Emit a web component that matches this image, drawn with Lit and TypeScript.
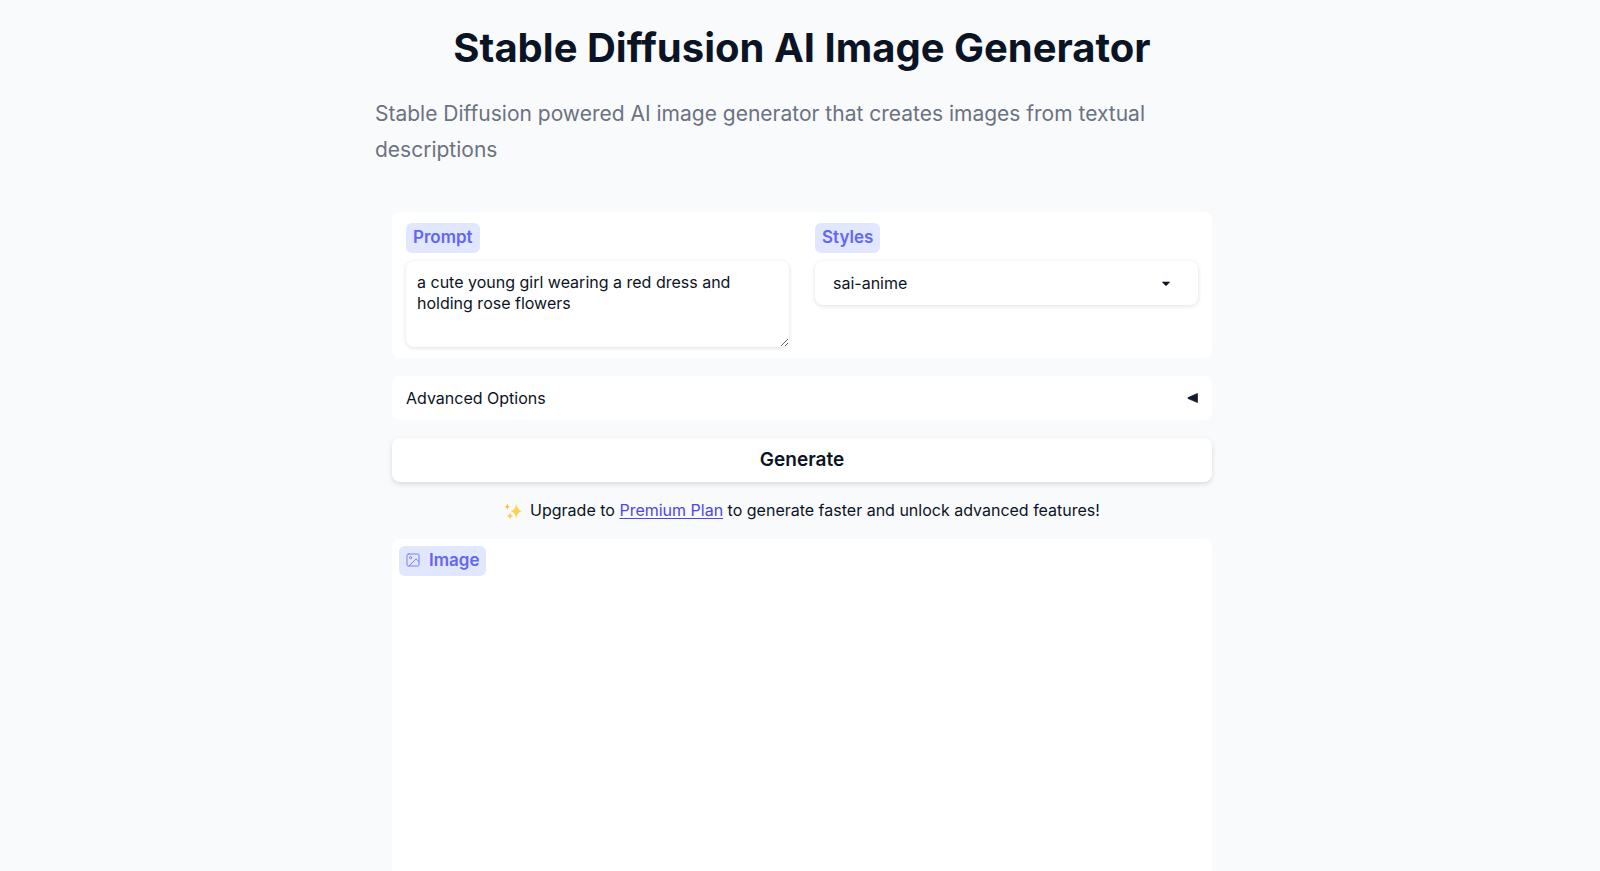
import { LitElement, html, css } from "lit";
import { customElement, state } from "lit/decorators.js";

@customElement("app-root")
export class AppRoot extends LitElement {
  static styles = css`
    :host {
      display: block;
      color: #0b1424;
      background: #f9fafc;
      font: 400 16px/22px Inter, "Open Sans", sans-serif;
    }
    * {
      box-sizing: border-box;
    }
    .page {
      display: flex;
      flex-direction: column;
      align-items: center;
      min-height: 100vh;
      padding: 20px 0 0 4px;
    }
    header {
      width: 100%;
      max-width: 854px;
    }
    h1 {
      margin: 0;
      font-size: 40px;
      line-height: 56px;
      font-weight: 700;
      text-align: center;
    }
    .lead {
      margin: 20px 0 44px;
      font-size: 21px;
      line-height: 36px;
      color: #6b7280;
    }
    main {
      flex: 1;
      display: flex;
      flex-direction: column;
      gap: 18px;
      width: 100%;
      max-width: 820px;
    }
    .panel {
      background: #fff;
      border-radius: 8px;
    }
    .fields {
      display: grid;
      grid-template-columns: 1fr 1fr;
      gap: 26px;
      padding: 11px 14px;
    }
    .field {
      display: flex;
      flex-direction: column;
      align-items: flex-start;
      gap: 8px;
    }
    .tag {
      display: inline-flex;
      align-items: center;
      gap: 9px;
      height: 30px;
      padding: 0 7px 2px;
      border-radius: 6px;
      background: #e0e7ff;
      color: #6366f1;
      font-size: 17px;
      font-weight: 600;
    }
    .tag svg {
      opacity: 0.8;
    }
    .control {
      display: block;
      width: 100%;
      margin: 0;
      border: 0;
      border-radius: 8px;
      background: #fff;
      color: inherit;
      font: inherit;
      box-shadow: 0 1px 4px rgba(0, 0, 0, 0.13);
    }
    textarea.control {
      height: 86px;
      padding: 11px;
      line-height: 21px;
      resize: vertical;
    }
    .picker {
      display: grid;
      width: 100%;
      align-items: center;
    }
    .picker > * {
      grid-area: 1 / 1;
    }
    select.control {
      height: 44px;
      padding: 0 18px;
      appearance: none;
    }
    .caret {
      justify-self: end;
      margin: 2px 27px 0 0;
      pointer-events: none;
    }
    .toggle {
      display: flex;
      justify-content: space-between;
      align-items: center;
      height: 44px;
      padding: 0 14px;
      border: 0;
      color: inherit;
      font: inherit;
    }
    .open {
      transform: rotate(-90deg);
    }
    .generate {
      height: 44px;
      border: 0;
      color: inherit;
      font: inherit;
      font-size: 19px;
      font-weight: 600;
      box-shadow: 0 2px 5px rgba(0, 0, 0, 0.13);
    }
    .upgrade {
      display: flex;
      justify-content: center;
      align-items: center;
      gap: 7px;
      margin: 0;
      line-height: 21px;
    }
    a {
      color: #4f46e5;
      text-underline-offset: 2px;
    }
    .result {
      flex: 1;
      min-height: 320px;
      padding: 7px;
      border-radius: 8px 8px 0 0;
    }
  `;

  @state() private expanded = false;

  render() {
    return html`
      <div class="page">
        <header>
          <h1>Stable Diffusion AI Image Generator</h1>
          <p class="lead">
            Stable Diffusion powered AI image generator that creates images from textual descriptions
          </p>
        </header>
        <main>
          <section class="panel fields">
            <div class="field">
              <label class="tag" for="prompt">Prompt</label>
              <textarea class="control" id="prompt" spellcheck="false"
                .value=${"a cute young girl wearing a red dress and holding rose flowers"}></textarea>
            </div>
            <div class="field">
              <label class="tag" for="styles">Styles</label>
              <div class="picker">
                <select class="control" id="styles">
                  <option>sai-anime</option>
                </select>
                <svg class="caret" width="10" height="6" viewBox="0 0 10 6" aria-hidden="true">
                  <path d="M1.4 1h7.2L5.6 4.3q-.6.5-1.2 0z" fill="#0b1424" stroke="#0b1424" stroke-width=".6" stroke-linejoin="round" />
                </svg>
              </div>
            </div>
          </section>
          <button class="panel toggle" type="button" aria-expanded=${this.expanded ? "true" : "false"}
            @click=${() => (this.expanded = !this.expanded)}>
            Advanced Options
            <svg class=${this.expanded ? "open" : ""} width="11" height="12" viewBox="0 0 11 12" aria-hidden="true">
              <path d="M10.5 1.4v9.2L1 6.5q-.7-.4 0-.9z" fill="#111b2b" stroke="#111b2b" stroke-width=".7" stroke-linejoin="round" />
            </svg>
          </button>
          <button class="panel generate" type="button">Generate</button>
          <p class="upgrade">
            <svg width="19" height="18" viewBox="0 0 19 18" aria-hidden="true">
              <g fill="#fcd34d">
                <path d="M12.3 1.5Q13 8.3 18 9.2Q13 10.1 12.3 17Q11.6 10.1 6.6 9.2Q11.6 8.3 12.3 1.5Z" />
                <path d="M3.4 1.5Q3.8 4.2 6.2 4.7Q3.8 5.2 3.4 7.9Q3 5.2 .6 4.7Q3 4.2 3.4 1.5Z" fill="#fbbf54" />
                <path d="M6 10.5Q6.4 13.5 9 14Q6.4 14.5 6 17.5Q5.6 14.5 3 14Q5.6 13.5 6 10.5Z" fill="#fbc95a" />
              </g>
            </svg>
            <span>Upgrade to <a href="#premium">Premium Plan</a> to generate faster and unlock advanced features!</span>
          </p>
          <section class="panel result">
            <span class="tag">
              <svg width="14" height="14" viewBox="0 0 14 14" fill="none" stroke="#6366f1" stroke-linecap="round" stroke-linejoin="round" aria-hidden="true">
                <rect x="1" y="1" width="12" height="12" rx="1.3" />
                <circle cx="4.6" cy="4.6" r="1.1" />
                <path d="M13 8.7 10 5.9 3 13" />
              </svg>
              Image
            </span>
          </section>
        </main>
      </div>
    `;
  }
}
